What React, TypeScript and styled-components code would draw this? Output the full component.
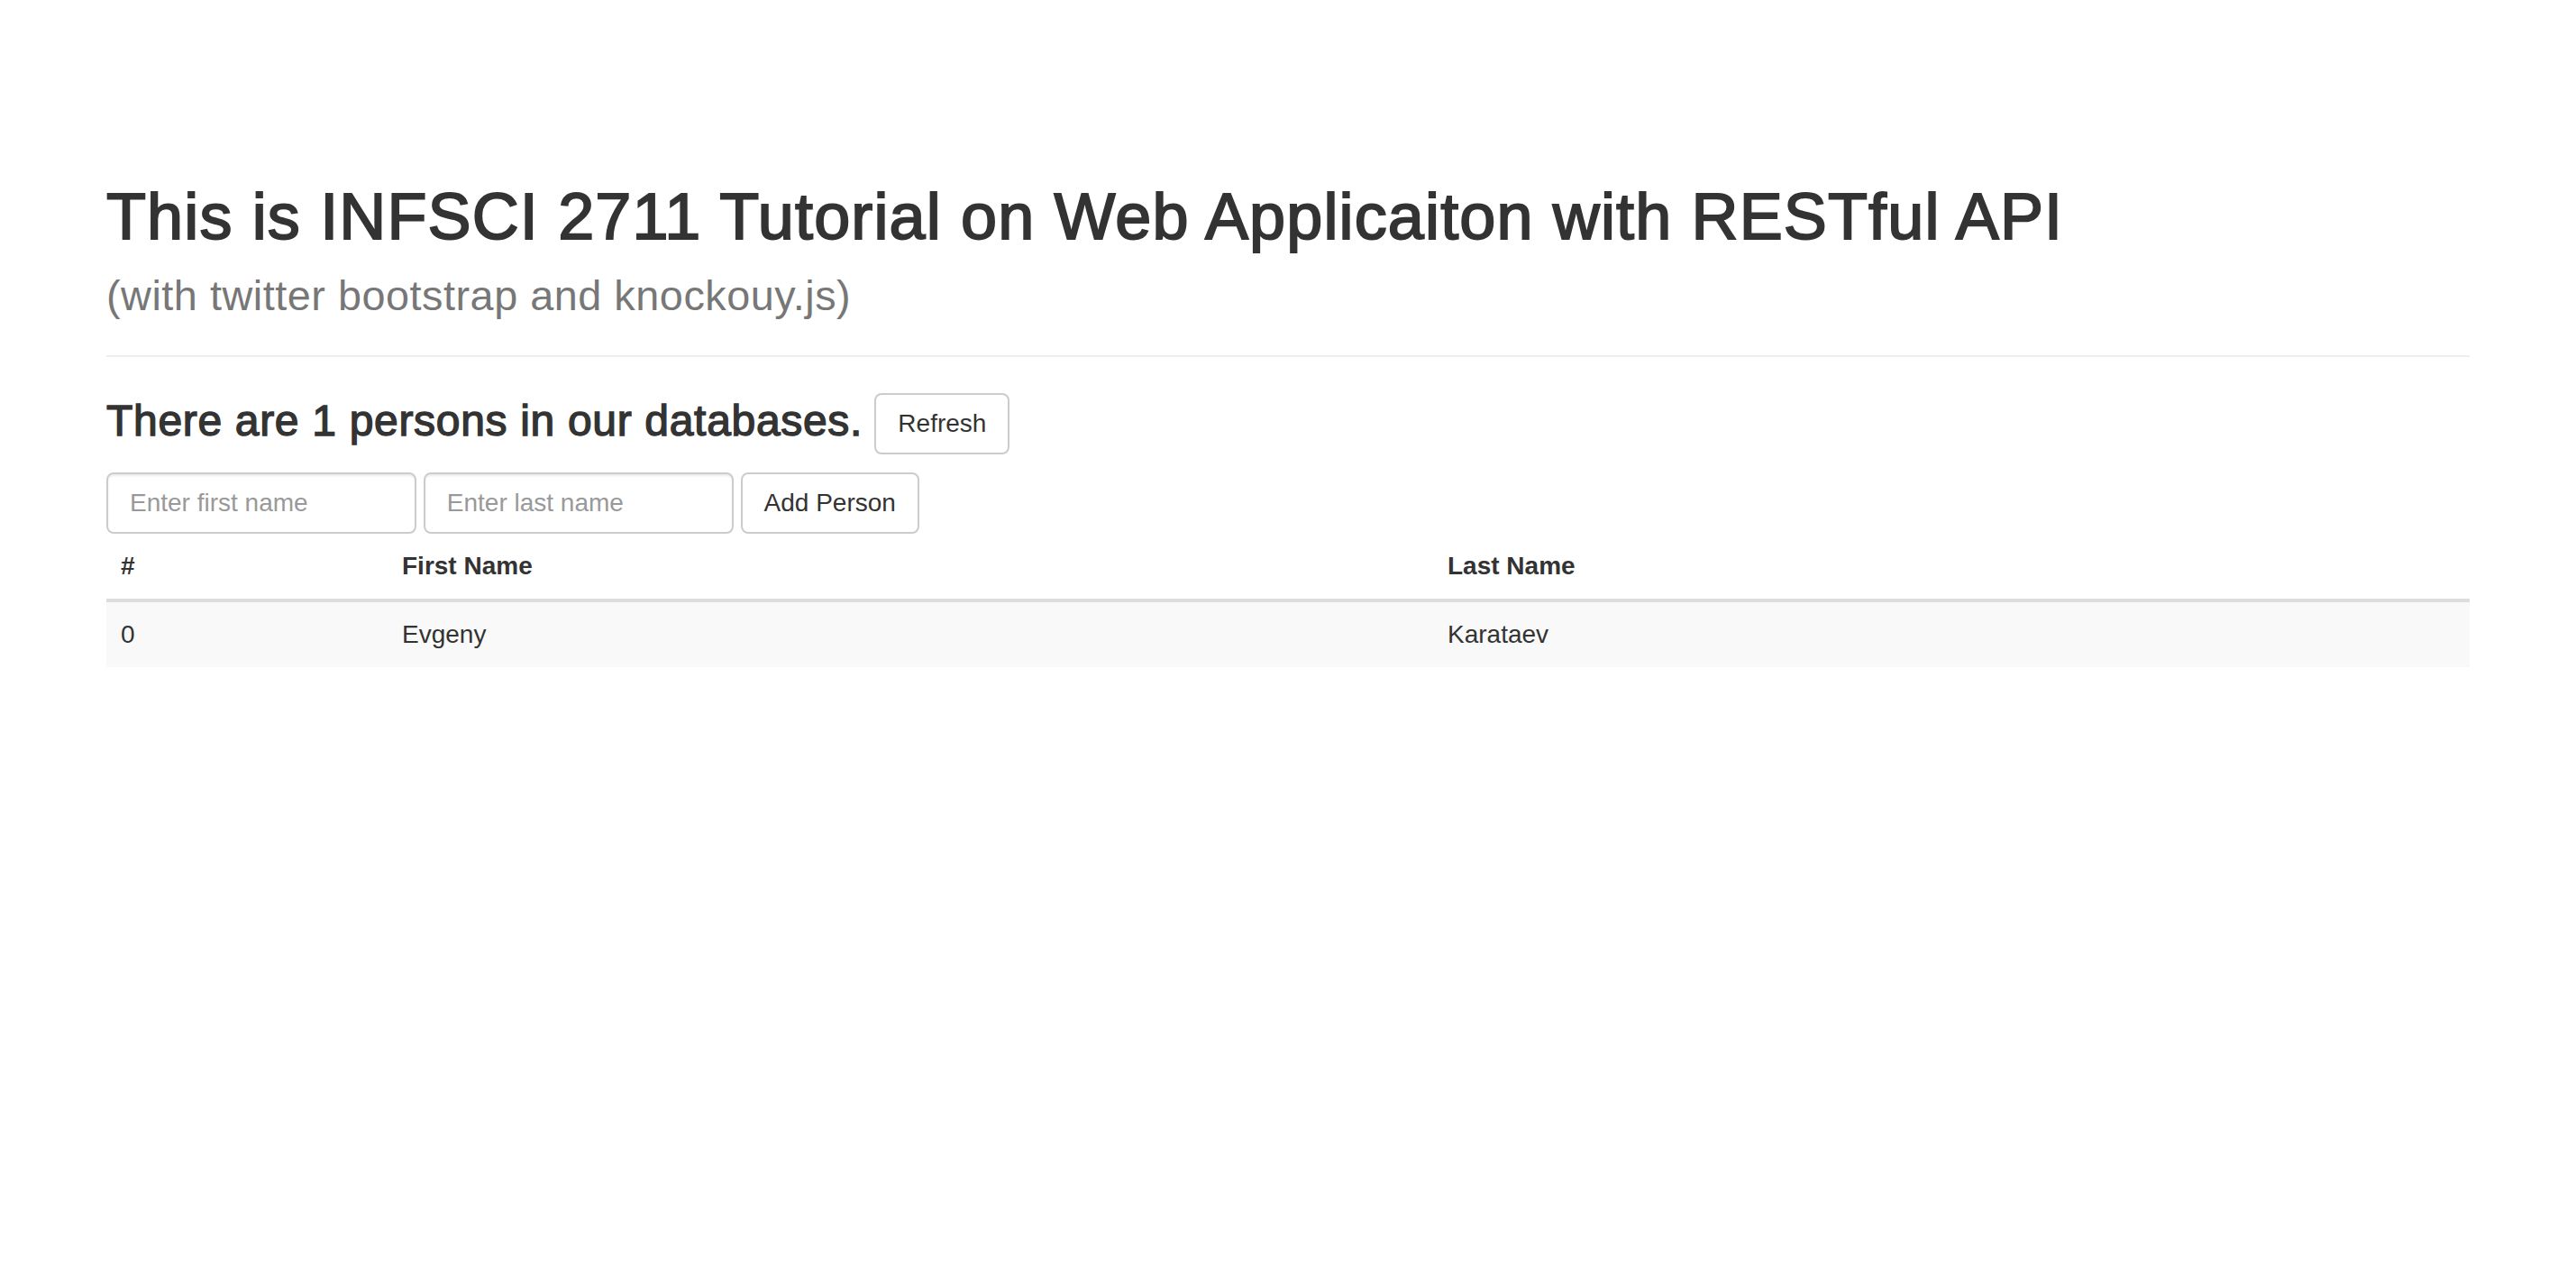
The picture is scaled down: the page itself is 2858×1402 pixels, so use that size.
import React from "react";
import styled, { createGlobalStyle } from "styled-components";

const GlobalStyle = createGlobalStyle`
  * { box-sizing: border-box; }
  html { zoom: 2; }
  body {
    margin: 0;
    background: #fff;
    color: #333;
    font-family: "Liberation Sans", Arial, Helvetica, sans-serif;
    font-size: 14px;
    line-height: 1.42857143;
  }
`;

const Container = styled.div`
  width: 1311px;
  margin: 0 auto;
  padding-top: 59px;
`;

const PageHeader = styled.div`
  margin: 40px 0 20px;
  padding-bottom: 9px;
  border-bottom: 1px solid #eee;
`;

const Title = styled.h1`
  margin: 20px 0 8.5px;
  padding-top: 1.5px;
  font-size: 36px;
  font-weight: 500;
  line-height: 1.1;
  letter-spacing: 0.57px;
  color: inherit;
`;

const TitleText = styled.span`
  -webkit-text-stroke: 0.95px #333;
`;

const Subtitle = styled.small`
  font-size: 65%;
  font-weight: 400;
  line-height: 1;
  letter-spacing: 0.26px;
  color: #777;
`;

const CountHeading = styled.h3`
  margin: 20px 0 10px;
  font-size: 24px;
  font-weight: 500;
  line-height: 1.1;
`;

const CountText = styled.span`
  letter-spacing: 0.34px;
  -webkit-text-stroke: 0.7px #333;
`;

const Button = styled.button`
  display: inline-block;
  margin: 0;
  padding: 6px 12px;
  font-family: inherit;
  font-size: 14px;
  font-weight: 400;
  line-height: 1.42857143;
  color: #333;
  background: #fff;
  border: 1px solid #ccc;
  border-radius: 4px;
  vertical-align: middle;
  white-space: nowrap;
  cursor: pointer;
`;

const InlineForm = styled.form`
  margin: 0;
`;

const TextInput = styled.input`
  display: inline-block;
  width: 172px;
  height: 34px;
  margin: 0;
  padding: 6px 12px;
  font-family: inherit;
  font-size: 14px;
  line-height: 1.42857143;
  color: #555;
  background: #fff;
  border: 1px solid #ccc;
  border-radius: 4px;
  box-shadow: inset 0 1px 1px rgba(0, 0, 0, 0.075);
  vertical-align: middle;
  outline: none;
  &::placeholder {
    color: #999;
  }
`;

const Table = styled.table`
  width: 100%;
  max-width: 100%;
  margin-bottom: 20px;
  table-layout: fixed;
  border-collapse: collapse;
  border-spacing: 0;
`;

const HeadCell = styled.th<{ $width?: number }>`
  width: ${(p) => (p.$width ? `${p.$width}px` : "auto")};
  padding: 8px;
  text-align: left;
  font-weight: bold;
  line-height: 1.42857143;
  vertical-align: bottom;
  border-bottom: 2px solid #ddd;
`;

const Row = styled.tr<{ $striped?: boolean }>`
  background: ${(p) => (p.$striped ? "#f9f9f9" : "transparent")};
`;

const Cell = styled.td`
  padding: 8px;
  line-height: 1.42857143;
  vertical-align: top;
  border-top: 1px solid #ddd;
`;

const people = [{ id: 0, first: "Evgeny", last: "Karataev" }];

export default function App() {
  return (
    <>
      <GlobalStyle />
      <Container>
        <PageHeader>
          <Title>
            <TitleText>
              This is INFSCI 2711 Tutorial on Web Applicaiton with RESTful API
            </TitleText>
            <br />
            <Subtitle>(with twitter bootstrap and knockouy.js)</Subtitle>
          </Title>
        </PageHeader>
        <CountHeading>
          <CountText>There are {people.length} persons in our databases.</CountText>{" "}
          <Button type="button">Refresh</Button>
        </CountHeading>
        <InlineForm onSubmit={(e) => e.preventDefault()}>
          <TextInput type="text" placeholder="Enter first name" />{" "}
          <TextInput type="text" placeholder="Enter last name" />{" "}
          <Button type="submit">Add Person</Button>
        </InlineForm>
        <Table>
          <thead>
            <tr>
              <HeadCell $width={156}>#</HeadCell>
              <HeadCell $width={580}>First Name</HeadCell>
              <HeadCell>Last Name</HeadCell>
            </tr>
          </thead>
          <tbody>
            {people.map((p, i) => (
              <Row key={p.id} $striped={i % 2 === 0}>
                <Cell>{p.id}</Cell>
                <Cell>{p.first}</Cell>
                <Cell>{p.last}</Cell>
              </Row>
            ))}
          </tbody>
        </Table>
      </Container>
    </>
  );
}
